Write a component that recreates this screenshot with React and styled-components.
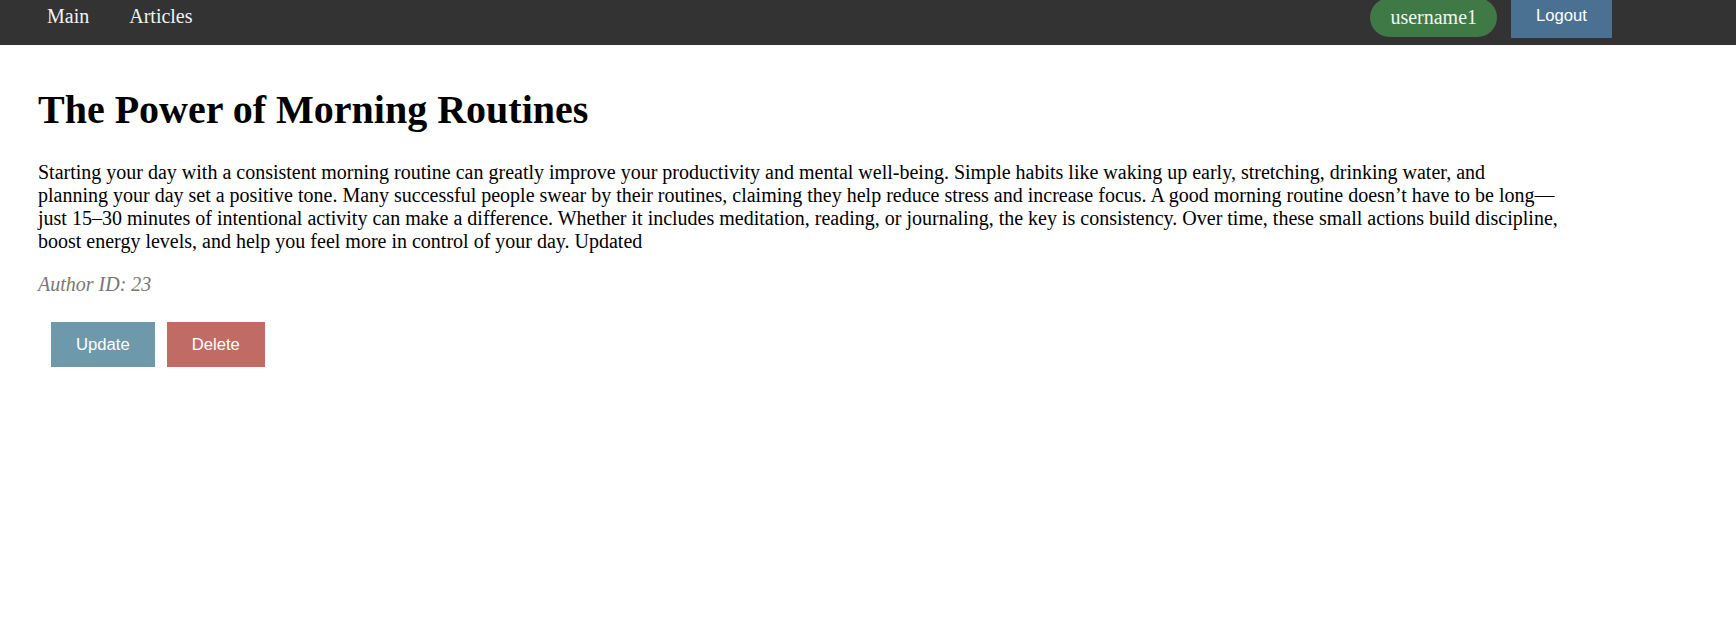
import React from "react";
import styled, { createGlobalStyle } from "styled-components";

const GlobalStyle = createGlobalStyle`
  html, body {
    margin: 0;
    padding: 0;
    background: #ffffff;
    font-family: "Liberation Serif", "Times New Roman", serif;
    color: #000;
  }
`;

const NavBar = styled.nav`
  height: 45px;
  background: #333333;
  overflow: hidden;
  display: flex;
  align-items: flex-start;
`;

const NavRow = styled.div`
  flex: 1;
  height: 45px;
  margin-top: -7px;
  display: flex;
  align-items: center;
  justify-content: space-between;
  padding: 0 124px 0 47px;
`;

const NavLinks = styled.div`
  display: flex;
  align-items: center;
  gap: 40px;
  padding-top: 2px;
`;

const NavLink = styled.a`
  font-family: "Liberation Serif", "Times New Roman", serif;
  font-size: 20px;
  color: #f2f2f2;
  text-decoration: none;
  cursor: pointer;
`;

const NavRight = styled.div`
  display: flex;
  align-items: center;
  gap: 14px;
`;

const UserPill = styled.span`
  display: inline-flex;
  align-items: center;
  height: 39px;
  padding: 0 20px;
  margin-top: 3px;
  border-radius: 20px;
  background: #3f7946;
  color: #f4f4f4;
  font-family: "Liberation Serif", "Times New Roman", serif;
  font-size: 20px;
`;

const Button = styled.button`
  border: none;
  border-radius: 0;
  padding: 0 25px;
  height: ${(p) => p.$h || 44}px;
  background: ${(p) => p.$bg};
  color: #ffffff;
  font-family: "Liberation Sans", Arial, sans-serif;
  font-size: 16.67px;
  cursor: pointer;
`;

const Main = styled.main`
  padding: 42px 0 0 38px;
`;

const Title = styled.h1`
  margin: 0;
  font-family: "Liberation Serif", "Times New Roman", serif;
  font-size: 40px;
  font-weight: bold;
  line-height: 46px;
`;

const Body = styled.p`
  margin: 28px 0 0;
  width: 1521px;
  font-size: 20px;
  line-height: 23px;
`;

const Author = styled.p`
  margin: 20px 0 0;
  font-size: 20px;
  line-height: 23px;
  font-style: italic;
  color: #777777;
`;

const Actions = styled.div`
  display: flex;
  gap: 12px;
  margin-top: 26px;
  padding-left: 13px;
`;

export default function App() {
  return (
    <>
      <GlobalStyle />
      <NavBar>
        <NavRow>
          <NavLinks>
            <NavLink>Main</NavLink>
            <NavLink>Articles</NavLink>
          </NavLinks>
          <NavRight>
            <UserPill>username1</UserPill>
            <Button $bg="#4a7192">Logout</Button>
          </NavRight>
        </NavRow>
      </NavBar>
      <Main>
        <Title>The Power of Morning Routines</Title>
        <Body>
          Starting your day with a consistent morning routine can greatly improve your
          productivity and mental well-being. Simple habits like waking up early, stretching,
          drinking water, and planning your day set a positive tone. Many successful people
          swear by their routines, claiming they help reduce stress and increase focus. A good
          morning routine doesn’t have to be long—just 15–30 minutes of intentional activity
          can make a difference. Whether it includes meditation, reading, or journaling, the key
          is consistency. Over time, these small actions build discipline, boost energy levels,
          and help you feel more in control of your day. Updated
        </Body>
        <Author>Author ID: 23</Author>
        <Actions>
          <Button $bg="#6e99aa" $h={45}>Update</Button>
          <Button $bg="#c06b64" $h={45}>Delete</Button>
        </Actions>
      </Main>
    </>
  );
}
